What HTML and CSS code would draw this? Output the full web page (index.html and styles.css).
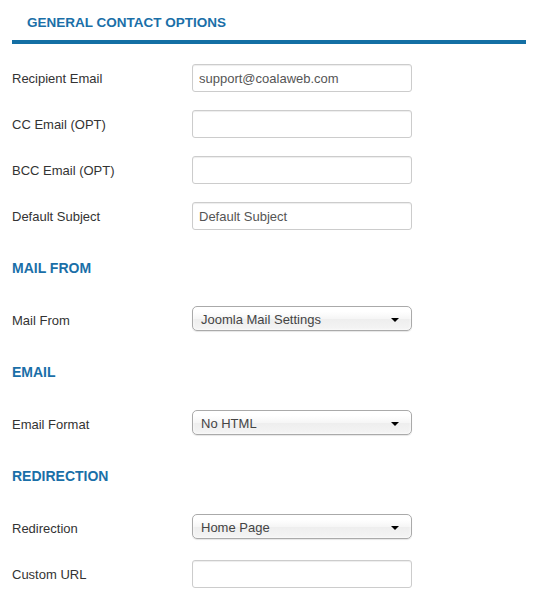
FILE: index.html
```html
<!DOCTYPE html>
<html>
<head>
<meta charset="utf-8">
<link rel="stylesheet" href="styles.css">
</head>
<body>
<div class="page">
  <div class="tab-head"><span class="tab-title">GENERAL CONTACT OPTIONS</span></div>

  <div class="row"><label class="lbl">Recipient Email</label><input class="field" type="text" value="support@coalaweb.com"></div>
  <div class="row"><label class="lbl">CC Email (OPT)</label><input class="field" type="text" value=""></div>
  <div class="row"><label class="lbl">BCC Email (OPT)</label><input class="field" type="text" value=""></div>
  <div class="row"><label class="lbl">Default Subject</label><input class="field" type="text" value="Default Subject"></div>

  <h3 class="section">MAIL FROM</h3>
  <div class="row"><label class="lbl">Mail From</label><div class="sel"><span>Joomla Mail Settings</span><i class="arrow"></i></div></div>

  <h3 class="section">EMAIL</h3>
  <div class="row"><label class="lbl">Email Format</label><div class="sel"><span>No HTML</span><i class="arrow"></i></div></div>

  <h3 class="section">REDIRECTION</h3>
  <div class="row"><label class="lbl">Redirection</label><div class="sel"><span>Home Page</span><i class="arrow"></i></div></div>
  <div class="row"><label class="lbl">Custom URL</label><input class="field" type="text" value=""></div>
</div>
</body>
</html>
```
FILE: styles.css
```css
html, body {
  margin: 0;
  padding: 0;
  background: #fff;
}
body {
  font-family: "Liberation Sans", Arial, sans-serif;
  font-size: 13px;
  color: #333;
}
.page {
  padding: 0 11px 0 12px;
}
.tab-head {
  padding: 13px 0 7px 15px;
  border-bottom: 4px solid #146fa4;
  margin-bottom: 20px;
}
.tab-title {
  display: block;
  font-size: 13.5px;
  font-weight: bold;
  line-height: 20px;
  color: #1a6fa8;
}
.row {
  display: flex;
  align-items: flex-start;
  height: 28px;
  margin-bottom: 18px;
}
.lbl {
  width: 180px;
  padding-top: 1px;
  line-height: 27px;
  font-size: 13px;
  color: #333;
}
.field {
  box-sizing: border-box;
  width: 220px;
  height: 28px;
  margin: 0;
  padding: 4px 6px;
  border: 1px solid #ccc;
  border-radius: 3px;
  box-shadow: inset 0 1px 1px rgba(0,0,0,0.075);
  font-family: "Liberation Sans", Arial, sans-serif;
  font-size: 13px;
  color: #555;
  background: #fff;
  outline: none;
}
.section {
  margin: 28px 0 28px 0;
  font-size: 14px;
  line-height: 20px;
  font-weight: bold;
  color: #1a6fa8;
}
.sel {
  box-sizing: border-box;
  width: 220px;
  height: 25px;
  display: flex;
  align-items: center;
  justify-content: space-between;
  padding: 1px 12px 0 8px;
  border: 1px solid #aaa;
  border-radius: 5px;
  background: linear-gradient(#fff 20%, #f6f6f6 50%, #eee 52%, #f4f4f4 100%);
  box-shadow: inset 0 0 3px #fff, 0 1px 1px rgba(0,0,0,0.1);
  color: #444;
  font-size: 13px;
  line-height: 23px;
}
.arrow {
  width: 0;
  height: 0;
  border-left: 4px solid transparent;
  border-right: 4px solid transparent;
  border-top: 4px solid #000;
  margin-top: 2px;
}
```
